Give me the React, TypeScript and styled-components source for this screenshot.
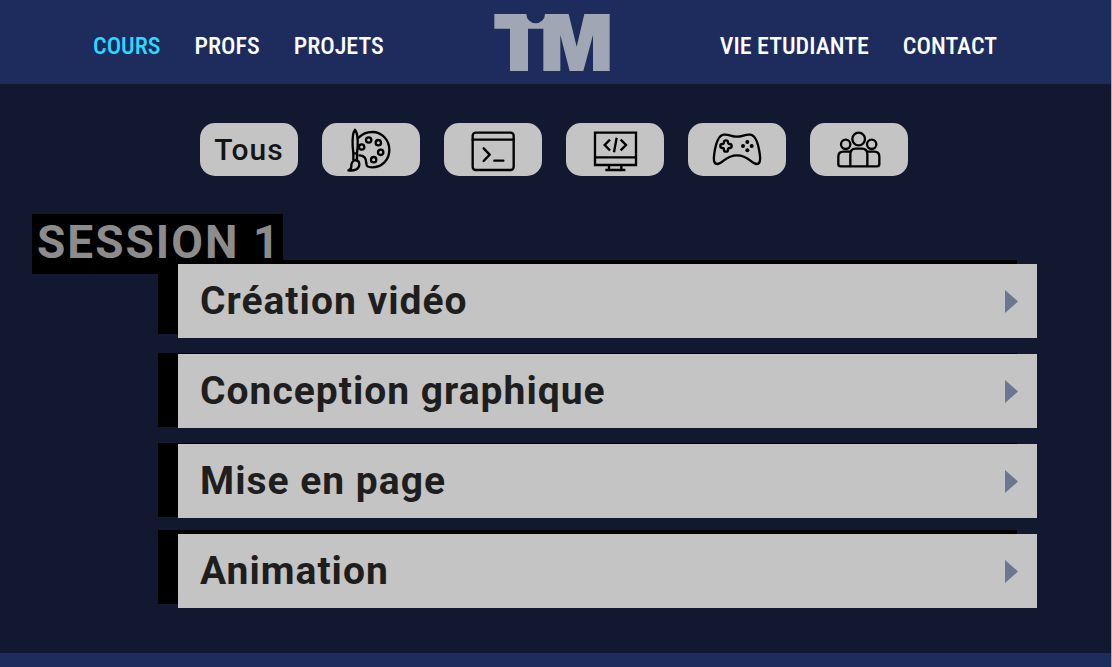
import React from "react";
import styled, { createGlobalStyle } from "styled-components";

const GlobalStyle = createGlobalStyle`
  *, *::before, *::after { box-sizing: border-box; }
  body { margin: 0; background: #111830; font-family: Roboto, "Liberation Sans", sans-serif; }
  button { font: inherit; cursor: pointer; }
`;

const Page = styled.div`
  display: flex;
  flex-direction: column;
  min-height: 100vh;
  border-right: 1px solid #a9aebb;
  background: #111830;
`;

const Header = styled.header`
  display: flex;
  align-items: center;
  justify-content: space-between;
  height: 84px;
  padding: 0 114px 0 93px;
  background: #1d2c5d;
`;

const Nav = styled.nav`
  display: flex;
  gap: 34px;
  padding-top: 8px;
`;

const NavLink = styled.a<{ $active?: boolean }>`
  color: ${(p) => (p.$active ? "#2cd9ff" : "#ffffff")};
  font-family: "Liberation Sans Narrow", "Roboto Condensed", "Liberation Sans", sans-serif;
  font-size: 24px;
  font-weight: 500;
  line-height: 32px;
  text-decoration: none;
  white-space: nowrap;
`;

const LogoLink = styled.a`
  display: block;
  height: 57px;
  color: #a0a6b4;
`;

const Main = styled.main`
  flex: 1;
  padding: 39px 0 45px;
`;

const Filters = styled.div`
  display: flex;
  justify-content: center;
  gap: 24px;
  padding-right: 3px;
`;

const FilterButton = styled.button`
  display: flex;
  align-items: center;
  justify-content: center;
  width: 98px;
  height: 53px;
  padding: 0;
  border: 0;
  border-radius: 15px;
  background: #c4c4c4;
  color: #141616;
  font-size: 30px;
  font-weight: 500;
  letter-spacing: 1px;
`;

const Icon = styled.svg`
  width: 50px;
  height: 50px;
  fill: none;
  stroke: #000000;
  stroke-width: 7;
  stroke-linecap: round;
  stroke-linejoin: round;
`;

const Session = styled.section`
  padding: 38px 74px 0 32px;
`;

const SessionTitle = styled.h2`
  width: fit-content;
  height: 60px;
  margin: 0;
  padding: 0 2px 0 5px;
  background: #000000;
  color: #8c8c8c;
  font-size: 46px;
  font-weight: 700;
  line-height: 56px;
  letter-spacing: 2px;
`;

const CourseList = styled.ul`
  display: flex;
  flex-direction: column;
  gap: 16px;
  margin: -10px 0 0 146px;
  padding: 0;
  list-style: none;
`;

const CourseButton = styled.button<{ $lift: number }>`
  display: flex;
  align-items: center;
  justify-content: space-between;
  width: 100%;
  height: 74px;
  padding: 0 19px 0 22px;
  border: 0;
  background: #c4c4c4;
  box-shadow: -20px -${(p) => p.$lift}px 0 #000000;
  color: #1e1e1e;
  font-size: 39px;
  font-weight: 700;
  letter-spacing: 1px;
  text-align: left;
`;

const Arrow = styled.svg`
  width: 13px;
  height: 23px;
  fill: #6c7592;
`;

const Footer = styled.footer`
  height: 14px;
  background: #1d2c5d;
`;

const Palette = () => (
  <Icon viewBox="468 43 150 150" aria-hidden="true">
    <path d="M506 81C520 66 534 64 547 64C576 64 598 88 598 118C598 148 576 170 546 170C532 170 529 166 529 158C529 142 522 134 508 134" />
    <circle cx="515" cy="109" r="8" />
    <circle cx="536" cy="88" r="8" />
    <circle cx="565" cy="96" r="8" />
    <circle cx="572" cy="125" r="8" />
    <circle cx="551" cy="147" r="8" />
    <path d="M495 57C488 66 487 84 488 106L490 128H501L503 106C504 84 502 66 495 57ZM490 128V147M501 128V147M496 148C486 151 484 158 484 166C484 174 480 178 475 179C492 181 507 177 508 162C508 154 503 149 496 148Z" />
  </Icon>
);

const Terminal = () => (
  <Icon viewBox="101 43 150 150" aria-hidden="true">
    <rect x="115" y="66" width="123" height="112" rx="9" />
    <path d="M115 87H238M148 113L166 132L148 151M180 150H207" />
  </Icon>
);

const Monitor = () => (
  <Icon viewBox="467 43 150 150" aria-hidden="true">
    <path strokeLinejoin="miter" strokeLinecap="butt" d="M482 66H605V163H482ZM482 140H605M524 163V178M561 163V178M513 178H573" />
    <path strokeLinejoin="miter" strokeLinecap="butt" d="M527 87L511 103L527 119M547 81L539 125M559 87L575 103L559 119" />
  </Icon>
);

const Gamepad = () => (
  <Icon viewBox="98 43 150 150" aria-hidden="true">
    <path d="M133 72C149 70 156 78 173 78C190 78 197 70 213 72C229 74 237 101 241 128C244 147 243 160 232 160C216 160 208 134 173 134C138 134 130 160 114 160C103 160 102 147 105 128C109 101 117 74 133 72Z" />
    <path d="M134 95C134 87 146 87 146 95C146 99 148 100 151 100C159 100 159 112 151 112C148 112 146 114 146 117C146 125 134 125 134 117C134 114 132 112 129 112C121 112 121 100 129 100C132 100 134 99 134 95Z" />
    <g fill="#000000" stroke="none">
      <circle cx="204" cy="94" r="6" />
      <circle cx="191" cy="106" r="6" />
      <circle cx="217" cy="106" r="6" />
      <circle cx="204" cy="119" r="6" />
    </g>
  </Icon>
);

const People = () => (
  <Icon viewBox="464 46 150 150" aria-hidden="true">
    <circle cx="538" cy="88" r="19" />
    <circle cx="499" cy="104" r="14" />
    <circle cx="577" cy="104" r="14" />
    <path d="M513 170V134C513 123 519 117 529 117H548C558 117 564 123 564 134V170M512 126H492C483 126 477 132 477 141V163Q477 170 484 170H593Q600 170 600 163V141C600 132 594 126 585 126H565" />
  </Icon>
);

const filters = [
  { label: "Arts", icon: <Palette /> },
  { label: "Programmation", icon: <Terminal /> },
  { label: "Web", icon: <Monitor /> },
  { label: "Jeux", icon: <Gamepad /> },
  { label: "Groupe", icon: <People /> },
];

const courses = [
  { name: "Création vidéo", lift: 4 },
  { name: "Conception graphique", lift: 1 },
  { name: "Mise en page", lift: 1 },
  { name: "Animation", lift: 4 },
];

export default function App() {
  return (
    <>
      <GlobalStyle />
      <Page>
        <Header>
          <Nav>
            <NavLink href="#cours" $active>COURS</NavLink>
            <NavLink href="#profs">PROFS</NavLink>
            <NavLink href="#projets">PROJETS</NavLink>
          </Nav>
          <LogoLink href="#accueil" aria-label="TiM">
            <svg width="116" height="57" viewBox="45 42 346 171" fill="currentColor" aria-hidden="true">
              <path d="M45 42H141A28 28 0 0 0 197 42H268L292 140L315 42H391V213H341V105L312 213H271L243 105V213H192V86H146V213H92V86H45Z" />
            </svg>
          </LogoLink>
          <Nav>
            <NavLink href="#vie">VIE ETUDIANTE</NavLink>
            <NavLink href="#contact">CONTACT</NavLink>
          </Nav>
        </Header>
        <Main>
          <Filters>
            <FilterButton type="button">Tous</FilterButton>
            {filters.map((f) => (
              <FilterButton key={f.label} type="button" aria-label={f.label}>
                {f.icon}
              </FilterButton>
            ))}
          </Filters>
          <Session>
            <SessionTitle>SESSION 1</SessionTitle>
            <CourseList>
              {courses.map((c) => (
                <li key={c.name}>
                  <CourseButton type="button" $lift={c.lift}>
                    {c.name}
                    <Arrow viewBox="0 0 13 23" aria-hidden="true">
                      <path d="M0 0L13 11.5L0 23Z" />
                    </Arrow>
                  </CourseButton>
                </li>
              ))}
            </CourseList>
          </Session>
        </Main>
        <Footer />
      </Page>
    </>
  );
}
